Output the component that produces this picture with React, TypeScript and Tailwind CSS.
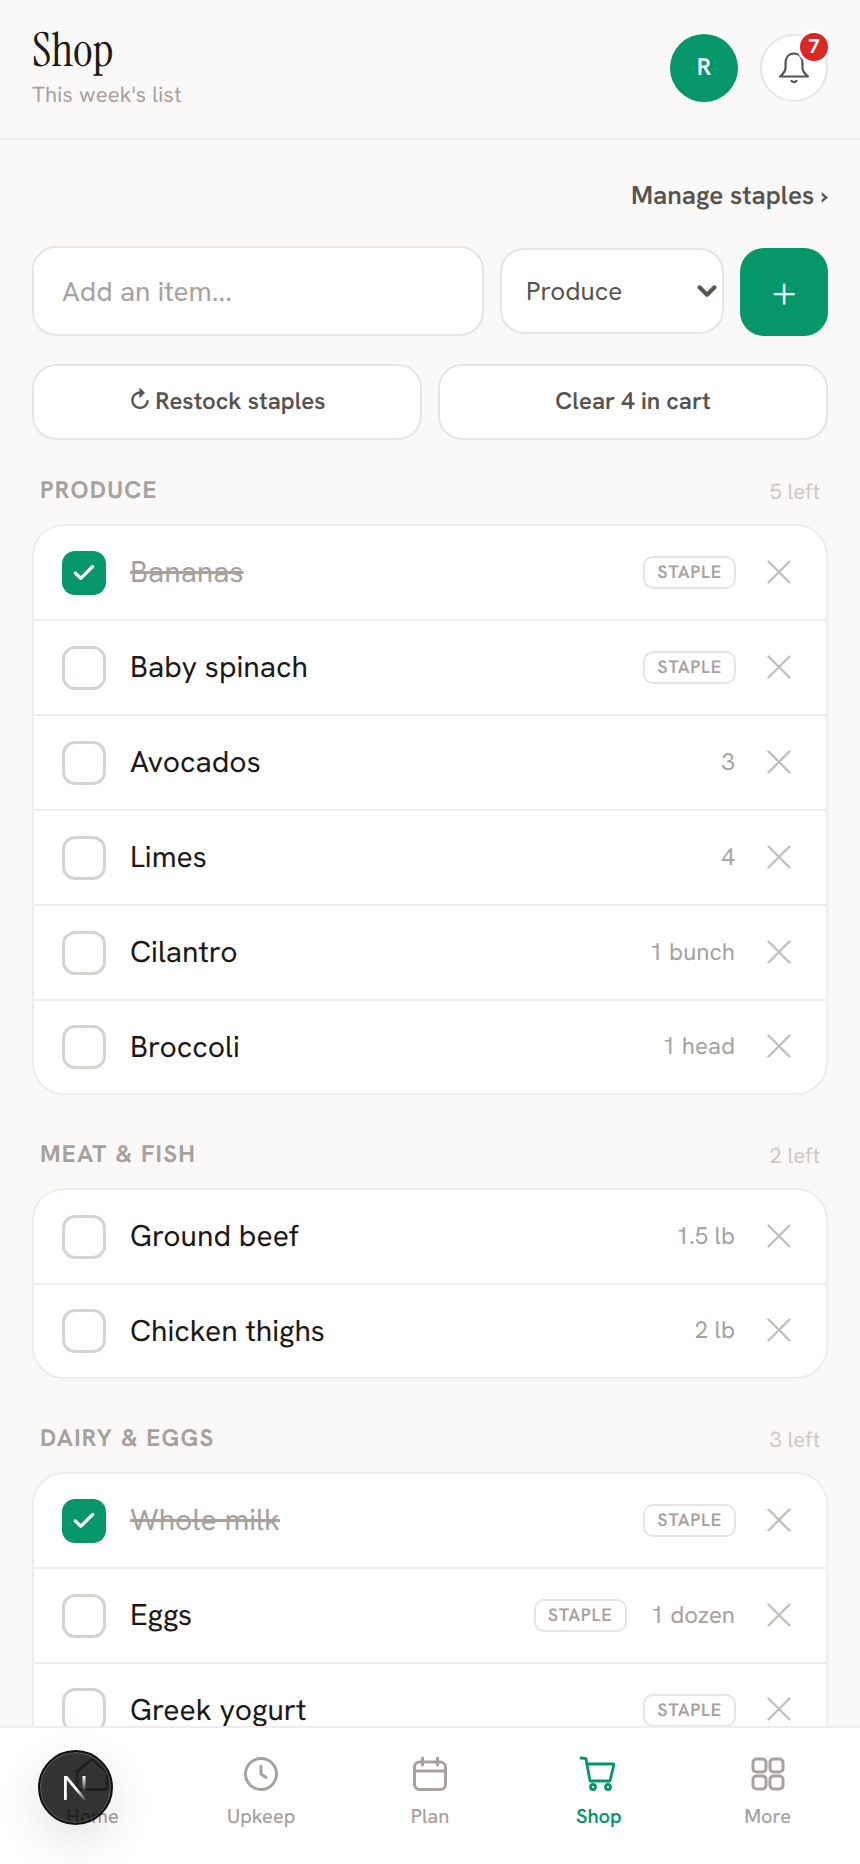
import { Check, ChevronDown, X } from "lucide-react";

type Item = { name: string; done?: boolean; staple?: boolean; qty?: string };

const sections: { title: string; left: string; items: Item[] }[] = [
  {
    title: "PRODUCE",
    left: "5 left",
    items: [
      { name: "Bananas", done: true, staple: true },
      { name: "Baby spinach", staple: true },
      { name: "Avocados", qty: "3" },
      { name: "Limes", qty: "4" },
      { name: "Cilantro", qty: "1 bunch" },
      { name: "Broccoli", qty: "1 head" },
    ],
  },
  {
    title: "MEAT & FISH",
    left: "2 left",
    items: [
      { name: "Ground beef", qty: "1.5 lb" },
      { name: "Chicken thighs", qty: "2 lb" },
    ],
  },
  {
    title: "DAIRY & EGGS",
    left: "3 left",
    items: [
      { name: "Whole milk", done: true, staple: true },
      { name: "Eggs", staple: true, qty: "1 dozen" },
      { name: "Greek yogurt", staple: true },
    ],
  },
];

function BellIcon() {
  return (
    <svg width="36" height="36" viewBox="0 0 36 36" fill="none" stroke="#57534e" strokeWidth="2.2" strokeLinecap="round" strokeLinejoin="round">
      <path d="M18 3.5C12 3.5 9.5 8.5 9.5 14v4c0 3.5-2.500 6-5.500 8.500h28c-3-2.500-5.500-5-5.500-8.500v-4c0-5.500-2.500-10.500-8.500-10.500Z" />
      <path d="M15.500 31c1.500 1.300 3.500 1.300 5 0" />
    </svg>
  );
}

function HomeIcon() {
  return (
    <svg width="36" height="36" viewBox="0 0 36 36" fill="none" stroke="#a8a29e" strokeWidth="3" strokeLinecap="round" strokeLinejoin="round">
      <path d="M3 16 18 3l15 13v15a2.500 2.500 0 0 1-2.500 2.500h-25A2.500 2.500 0 0 1 3 31Z" />
    </svg>
  );
}

function ClockIcon() {
  return (
    <svg width="36" height="36" viewBox="0 0 36 36" fill="none" stroke="#a8a29e" strokeWidth="3" strokeLinecap="round" strokeLinejoin="round">
      <circle cx="18" cy="18" r="15.500" />
      <path d="M18 10v8l5 3.500" />
    </svg>
  );
}

function CalendarIcon() {
  return (
    <svg width="36" height="36" viewBox="0 0 36 36" fill="none" stroke="#a8a29e" strokeWidth="3" strokeLinecap="round" strokeLinejoin="round">
      <rect x="2.500" y="6" width="31" height="27.500" rx="5" />
      <path d="M2.500 15h31M10.500 2v7M25.500 2v7" />
    </svg>
  );
}

function CartIcon() {
  return (
    <svg className="-ml-1" width="36" height="36" viewBox="0 0 36 36" fill="none" stroke="#059669" strokeWidth="2.800" strokeLinecap="round" strokeLinejoin="round">
      <path d="M2 2l5 .7L11 25h20l4-17H7.500" />
      <circle cx="14" cy="31" r="2.500" />
      <circle cx="29" cy="31" r="2.500" />
    </svg>
  );
}

function GridIcon() {
  return (
    <svg width="36" height="36" viewBox="0 0 36 36" fill="none" stroke="#a8a29e" strokeWidth="3" strokeLinejoin="round">
      <rect x="3" y="3" width="13" height="13" rx="3.500" />
      <rect x="20" y="3" width="13" height="13" rx="3.500" />
      <rect x="3" y="20" width="13" height="13" rx="3.500" />
      <rect x="20" y="20" width="13" height="13" rx="3.500" />
    </svg>
  );
}

function NextLogo() {
  return (
    <svg width="26" height="26" viewBox="0 0 26 26" fill="none">
      <defs>
        <linearGradient id="diag" x1="8" y1="4" x2="24" y2="25" gradientUnits="userSpaceOnUse">
          <stop offset="0.45" stopColor="#fff" />
          <stop offset="1" stopColor="#fff" stopOpacity="0" />
        </linearGradient>
        <linearGradient id="stem" x1="21" y1="1" x2="21" y2="17" gradientUnits="userSpaceOnUse">
          <stop stopColor="#fff" />
          <stop offset="1" stopColor="#fff" stopOpacity="0" />
        </linearGradient>
      </defs>
      <path d="M1 1h3.200L24 25h-3.500L3.800 5v20H1Z" fill="url(#diag)" />
      <rect x="19.500" y="1" width="3" height="17" fill="url(#stem)" />
    </svg>
  );
}

function Row({ item }: { item: Item }) {
  return (
    <div className="flex h-[95px] items-center border-b-2 border-[#f0eeec] pl-7 pr-[26px] last:h-[92px] last:border-b-0">
      {item.done ? (
        <div className="flex h-11 w-11 items-center justify-center rounded-[13px] bg-[#059669] text-white">
          <Check size={26} strokeWidth={3} />
        </div>
      ) : (
        <div className="h-11 w-11 rounded-[13px] border-[3px] border-[#d6d3d1] bg-white" />
      )}
      <span
        className={
          item.done
            ? "ml-6 flex-1 text-[30px] text-[#a8a29e] line-through"
            : "ml-6 flex-1 text-[30px] text-[#1c1917]"
        }
      >
        {item.name}
      </span>
      {item.staple && (
        <span className="-mr-px flex h-[33px] items-center rounded-[10px] border-2 border-[#e7e5e4] px-3 text-[18px] font-semibold tracking-[0.04em] text-[#a8a29e]">
          STAPLE
        </span>
      )}
      {item.qty && <span className="ml-[25px] text-[24px] text-[#a8a29e]">{item.qty}</span>}
      <X className="ml-[23px] -translate-y-px text-[#c4bfba]" size={42} strokeWidth={1.4} />
    </div>
  );
}

function NavItem({ label, active, children }: { label: string; active?: boolean; children: React.ReactNode }) {
  return (
    <div className="flex flex-1 flex-col items-center gap-3">
      <div className="flex h-9 items-center">{children}</div>
      <span className={active ? "text-[20px] font-semibold leading-[26px] text-[#059669]" : "text-[20px] font-medium leading-[26px] text-[#a8a29e]"}>
        {label}
      </span>
    </div>
  );
}

export default function App() {
  return (
    <div className="relative h-[1864px] overflow-hidden bg-[#faf9f7] font-['Hanken_Grotesk','Inter',sans-serif] antialiased [text-rendering:geometricPrecision]">
      <header className="flex h-[140px] items-center justify-between border-b-2 border-[#efedeb] px-8 pb-[2px]">
        <div>
          <h1 className="mb-[6px] font-['Instrument_Serif','Liberation_Serif',serif] text-[47px] leading-[48px] text-[#1c1917]">Shop</h1>
          <p className="text-[22px] leading-[30px] tracking-[0.2px] text-[#a8a29e]">This week's list</p>
        </div>
        <div className="flex items-center gap-[22px]">
          <div className="flex h-[68px] w-[68px] items-center justify-center rounded-full bg-[#059669] text-[24px] font-semibold text-white">
            R
          </div>
          <div className="relative flex h-[68px] w-[68px] items-center justify-center rounded-full border-2 border-[#e7e5e4] bg-white">
            <BellIcon />
            <span className="absolute -right-[2px] -top-[3px] flex h-7 w-7 items-center justify-center rounded-full bg-[#dc2626] text-[20px] font-bold text-white ring-[3px] ring-white">
              7
            </span>
          </div>
        </div>
      </header>

      <div className="px-8">
        <div className="mt-[37px] text-right text-[26px] font-semibold leading-9 text-[#57534e]">Manage staples ›</div>
        <div className="mt-[33px] flex items-center gap-4">
          <input
            placeholder="Add an item..."
            className="h-[90px] min-w-0 flex-1 rounded-3xl border-2 border-[#e7e5e4] bg-white px-7 text-[28px] text-[#44403c] outline-none placeholder:text-[#a8a29e]"
          />
          <div className="relative w-[224px]">
            <select
              defaultValue="Produce"
              className="h-[86px] w-full appearance-none rounded-3xl border-2 border-[#e7e5e4] bg-white px-6 text-[26px] text-[#57534e] outline-none"
            >
              <option>Produce</option>
              <option>Meat &amp; Fish</option>
              <option>Dairy &amp; Eggs</option>
            </select>
            <ChevronDown
              className="pointer-events-none absolute right-[2px] top-1/2 -translate-y-1/2 text-[#57534e]"
              size={30}
              strokeWidth={3.2}
            />
          </div>
          <div className="mt-[2px] flex h-[88px] w-[88px] items-center justify-center rounded-3xl bg-[#059669] pb-[2px] text-[44px] font-light leading-none text-white">
            +
          </div>
        </div>
        <div className="mt-7 flex gap-4">
          <div className="flex h-[76px] flex-1 items-center justify-center gap-1 rounded-3xl border-2 border-[#e7e5e4] bg-white text-[24px] font-semibold text-[#57534e]">
            <span className="font-medium">↻</span>
            Restock staples
          </div>
          <div className="flex h-[76px] flex-1 items-center justify-center rounded-3xl border-2 border-[#e7e5e4] bg-white text-[24px] font-semibold text-[#57534e]">
            Clear 4 in cart
          </div>
        </div>

        {sections.map((s, i) => (
          <section key={s.title} className={i === 0 ? "mt-9" : "mt-[45px]"}>
            <div className="mb-[18px] flex h-[30px] items-center justify-between px-2">
              <span className="text-[24px] font-bold tracking-[0.055em] text-[#a8a29e]">{s.title}</span>
              <span className="text-[22px] text-[#cdc9c5]">{s.left}</span>
            </div>
            <div className="overflow-hidden rounded-[32px] border-2 border-[#efedeb] bg-white">
              {s.items.map((it) => (
                <Row key={it.name} item={it} />
              ))}
            </div>
          </section>
        ))}
      </div>

      <nav className="absolute bottom-0 left-0 right-0 flex h-[138px] items-start border-t-2 border-[#efedeb] bg-white px-2 pt-[28px]">
        <NavItem label="Home">
          <HomeIcon />
        </NavItem>
        <NavItem label="Upkeep">
          <ClockIcon />
        </NavItem>
        <NavItem label="Plan">
          <CalendarIcon />
        </NavItem>
        <NavItem label="Shop" active>
          <CartIcon />
        </NavItem>
        <NavItem label="More">
          <GridIcon />
        </NavItem>
      </nav>

      <div className="absolute left-[38px] top-[1750px] flex h-[75px] w-[75px] items-center justify-center rounded-full border-2 border-[#111] bg-black/80 shadow-[0_16px_48px_rgba(0,0,0,0.12)] ring-1 ring-inset ring-white/20">
        <NextLogo />
      </div>
    </div>
  );
}
